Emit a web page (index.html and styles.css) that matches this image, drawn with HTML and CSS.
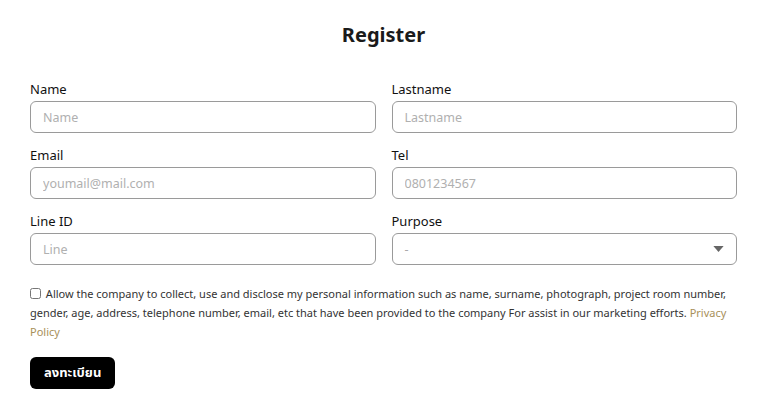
FILE: index.html
```html
<!doctype html>
<html>

<head>
	<meta charset="utf-8">
	<title>Register</title>
	<link rel="stylesheet" href="styles.css">
</head>

<body>
	<div class="register">
		<h1>Register</h1>
		<form class="form">
			<div class="field">
				<label>Name</label>
				<input type="text" placeholder="Name">
			</div>
			<div class="field">
				<label>Lastname</label>
				<input type="text" placeholder="Lastname">
			</div>
			<div class="field">
				<label>Email</label>
				<input type="text" placeholder="youmail@mail.com">
			</div>
			<div class="field">
				<label>Tel</label>
				<input type="text" placeholder="0801234567">
			</div>
			<div class="field">
				<label>Line ID</label>
				<input type="text" placeholder="Line">
			</div>
			<div class="field">
				<label>Purpose</label>
				<div class="select">
					<span>-</span>
					<svg width="11" height="6" viewBox="0 0 12 7"><path d="M0 0h12L6 7z" fill="#666"/></svg>
				</div>
			</div>
			<p class="consent">
				<input type="checkbox"> Allow the company to collect, use and disclose my personal information such as name, surname, photograph, project room number, gender, age, address, telephone number, email, etc that have been provided to the company For assist in our marketing efforts. <a href="#">Privacy Policy</a>
			</p>
			<div>
				<button class="btn" type="button">ลงทะเบียน</button>
			</div>
		</form>
	</div>
</body>

</html>
```

FILE: styles.css
```css
body {
	margin: 0;
	background: #fff;
	font-family: "Noto Sans", "Noto Sans Thai", "Liberation Sans", sans-serif;
	color: #222;
}

.register {
	width: 707px;
	margin: 0 0 0 30px;
}

.register h1 {
	margin: 22px 0 32px;
	text-align: center;
	font-size: 20px;
	font-weight: 700;
	line-height: 26px;
	color: #1a1a1a;
}

.form {
	display: grid;
	grid-template-columns: 1fr 1fr;
	column-gap: 16px;
	row-gap: 13px;
}

.field {
	display: flex;
	flex-direction: column;
}

.field label {
	font-size: 13px;
	font-weight: 400;
	line-height: 18px;
	margin-bottom: 3px;
	color: #111;
}

.field input,
.select {
	box-sizing: border-box;
	height: 32px;
	border: 1px solid #9a9a9a;
	border-radius: 6px;
	padding: 0 12px;
	font-family: inherit;
	font-size: 12.5px;
	color: #333;
	outline: none;
}

.field input::placeholder {
	color: #b0b0b0;
}

.select {
	display: flex;
	align-items: center;
	justify-content: space-between;
	color: #aaa;
}

.consent {
	grid-column: 1 / -1;
	margin: 6px 0 0;
	font-size: 11px;
	line-height: 19px;
	color: #333;
}

.consent input {
	margin: 0 2px 0 0;
	width: 11px;
	height: 11px;
	vertical-align: -1px;
}

.consent a {
	color: #a8905a;
	text-decoration: none;
}

.btn {
	background: #000;
	color: #fff;
	border: none;
	border-radius: 6px;
	height: 32px;
	padding: 0 14px;
	font-family: inherit;
	font-size: 13px;
	font-weight: 700;
	margin-top: 3px;
}
```
